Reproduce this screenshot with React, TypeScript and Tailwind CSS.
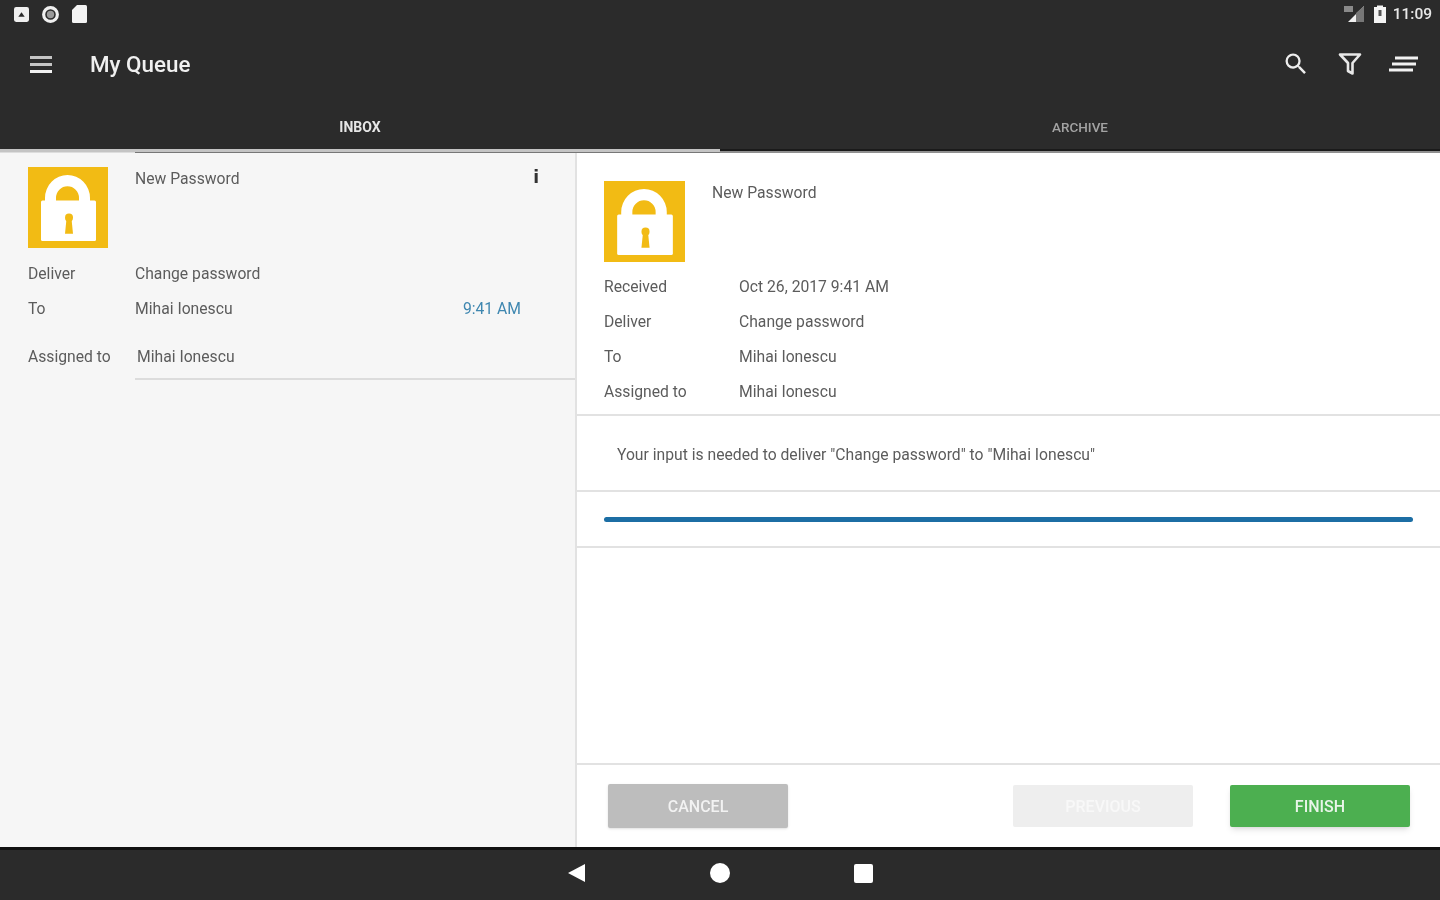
function LockTile({ className }: { className: string }) {
  return (
    <svg className={className} viewBox="0 0 80 80" preserveAspectRatio="none">
      <rect width="80" height="80" fill="#f2bb14" />
      <path d="M17 34 V30.5 A22.5 22.5 0 0 1 62 30.5 V34 H51 V30.5 A11.5 11.5 0 0 0 28 30.5 V34 Z" fill="#fff" />
      <rect x="13" y="33" width="55" height="40" rx="1.5" fill="#fff" />
      <circle cx="41" cy="50" r="4" fill="#f2bb14" />
      <path d="M38.5 51 L43.5 51 L45 66 L37 66 Z" fill="#f2bb14" />
    </svg>
  );
}

function MenuIcon() {
  return (
    <svg width="22" height="17" viewBox="0 0 22 17">
      <rect y="0" width="22" height="3" fill="#c4c4c4" />
      <rect y="7" width="22" height="3" fill="#c4c4c4" />
      <rect y="14" width="22" height="3" fill="#f2f2f2" />
    </svg>
  );
}

function SearchIcon() {
  return (
    <svg width="28" height="28" viewBox="0 0 24 24" fill="#eeeeee">
      <path d="M15.5 14h-.79l-.28-.27A6.471 6.471 0 0 0 16 9.5 6.5 6.5 0 1 0 9.5 16c1.61 0 3.09-.59 4.23-1.57l.27.28v.79l5 4.99L20.49 19l-4.99-5zm-6 0C7.01 14 5 11.99 5 9.5S7.01 5 9.5 5 14 7.01 14 9.5 11.99 14 9.5 14z" />
    </svg>
  );
}

function FilterIcon() {
  return (
    <svg width="24" height="24" viewBox="0 0 24 24" fill="none" stroke="#e8e8e8" strokeWidth="2.6">
      <path d="M2 2.5 H22 L14.5 11 V21.5 L10 19 V11 Z" strokeLinejoin="round" />
    </svg>
  );
}

function SortIcon() {
  return (
    <svg className="ml-[-1px]" width="29" height="16" viewBox="0 0 29 16" stroke="#f2f2f2" strokeWidth="2.8">
      <path d="M6 2 H29 M3 8 H27 M0 14 H24" />
    </svg>
  );
}

function StatusBar() {
  return (
    <div className="flex h-[28px] items-center justify-between pr-[8px] pl-[14px]">
      <div className="flex items-center gap-[12px]">
        <svg width="15" height="15" viewBox="0 0 14 14">
          <rect width="14" height="14" rx="2" fill="#f0f0f0" />
          <path d="M4 9 L7 5 L10 9 Z" fill="#2b2b2b" />
        </svg>
        <svg width="19" height="19" viewBox="0 0 18 18">
          <circle cx="9" cy="9" r="6.5" fill="none" stroke="#f0f0f0" strokeWidth="3" />
          <circle cx="9" cy="9" r="3.5" fill="#999" />
        </svg>
        <svg width="15" height="18" viewBox="0 0 15 18">
          <path d="M5 0 H13.5 Q15 0 15 1.5 V16.5 Q15 18 13.5 18 H1.5 Q0 18 0 16.5 V5 Z" fill="#f4f4f4" />
        </svg>
      </div>
      <div className="flex items-center gap-[6px]">
        <svg className="mr-[2px]" width="22" height="18" viewBox="0 0 22 18">
          <path d="M21 1 V17 H5 Z" fill="#f0f0f0" />
          <path d="M21 1 V17 H13 V8 Z" fill="#777" />
          <rect x="1" y="1" width="9" height="6" fill="#8a8a8a" />
        </svg>
        <svg width="14" height="18" viewBox="0 0 12 18">
          <path d="M3 2 V0.5 H9 V2 H12 V18 H0 V2 Z" fill="#f4f4f4" />
          <rect x="4.5" y="5" width="3" height="6" fill="#555" />
        </svg>
        <span className="pt-[1px] text-[15.5px] font-medium text-[#e8e8e8]">11:09</span>
      </div>
    </div>
  );
}

function Toolbar() {
  return (
    <div className="flex h-[72px] items-start justify-between pt-[20px] pr-[22px] pl-[30px]">
      <div className="flex items-center gap-[38px]">
        <MenuIcon />
        <span className="text-[22.4px] leading-[33px] font-medium text-[#f0f0f0]">My Queue</span>
      </div>
      <div className="flex items-center gap-[28px] pt-[2px]">
        <SearchIcon />
        <FilterIcon />
        <SortIcon />
      </div>
    </div>
  );
}

function Tabs() {
  return (
    <div className="flex h-[53px]">
      <div className="relative flex w-1/2 items-center justify-center pt-[1px] text-[14px] font-bold text-[#e6e6e6]">
        INBOX
        <div className="absolute right-0 bottom-[1px] left-0 h-[3px] bg-[#c4c4c4]" />
        <div className="absolute bottom-0 left-0 h-[1px] w-[135px] bg-[#dddddd]" />
        <div className="absolute right-0 bottom-0 left-[135px] h-[1px] bg-[#777777]" />
      </div>
      <div className="relative flex w-1/2 items-center justify-center pt-[1px] text-[13.5px] font-medium text-[#a3a3a3]">
        ARCHIVE
        <div className="absolute right-0 bottom-[2px] left-0 h-[2px] bg-[#1a1a1a]" />
        <div className="absolute right-0 bottom-0 left-0 h-[2px] bg-[#8f8f8f]" />
      </div>
    </div>
  );
}

function QueueItem() {
  return (
    <div className="flex flex-col pt-[14px] pl-[28px] text-[#5c5c5c]">
      <div className="flex h-[81px] items-start">
        <LockTile className="h-[81px] w-[80px] shrink-0" />
        <div className="ml-[27px] flex flex-1 items-start justify-between pr-[36px]">
          <span className="leading-[24px]">New Password</span>
          <span className="font-['DejaVu_Sans',sans-serif] text-[17px] leading-[20px] font-bold text-[#333]">i</span>
        </div>
      </div>
      <div className="mt-[14px] flex h-[24px] items-center">
        <span className="w-[107px]">Deliver</span>
        <span>Change password</span>
      </div>
      <div className="mt-[11px] flex h-[24px] items-center pr-[54px]">
        <span className="w-[107px]">To</span>
        <span className="flex-1">Mihai Ionescu</span>
        <span className="text-[#3f87b0]">9:41 AM</span>
      </div>
      <div className="mt-[24px] flex h-[24px] items-center">
        <span className="w-[109px]">Assigned to</span>
        <span>Mihai Ionescu</span>
      </div>
      <div className="mt-[9px] ml-[107px] h-[2px] bg-[#dcdcdc]" />
    </div>
  );
}

function DetailRow({ label, value }: { label: string; value: string }) {
  return (
    <div className="flex h-[35px] items-center pt-[1px]">
      <span className="w-[135px]">{label}</span>
      <span>{value}</span>
    </div>
  );
}

function ActionButton({ label, className }: { label: string; className: string }) {
  return (
    <div className={`flex h-[42px] w-[180px] items-center justify-center rounded-[2px] pt-[1px] text-[16px] font-medium ${className}`}>
      {label}
    </div>
  );
}

function Detail() {
  return (
    <div className="flex flex-1 flex-col bg-white text-[#5c5c5c]">
      <div className="flex flex-col border-b-2 border-[#e2e2e2] pt-[28px] pb-[5px] pl-[27px]">
        <div className="flex h-[81px] items-start">
          <LockTile className="h-[81px] w-[81px] shrink-0" />
          <span className="ml-[27px] leading-[24px]">New Password</span>
        </div>
        <div className="mt-[7px] flex flex-col">
          <DetailRow label="Received" value="Oct 26, 2017 9:41 AM" />
          <DetailRow label="Deliver" value="Change password" />
          <DetailRow label="To" value="Mihai Ionescu" />
          <DetailRow label="Assigned to" value="Mihai Ionescu" />
        </div>
      </div>
      <div className="flex h-[76px] items-center border-b-2 border-[#e2e2e2] pt-[4px] pl-[40px]">
        Your input is needed to deliver "Change password" to "Mihai Ionescu"
      </div>
      <div className="flex h-[56px] items-center border-b-2 border-[#e2e2e2] pr-[27px] pl-[27px]">
        <div className="h-[5px] w-full rounded-full bg-[#1c6ea4]" />
      </div>
      <div className="flex-1" />
      <div className="flex h-[84px] items-center justify-between border-t-2 border-[#e2e2e2] pr-[30px] pl-[31px]">
        <ActionButton label="CANCEL" className="h-[44px] bg-[#bdbdbd] text-[#f2f2f2] shadow-sm" />
        <div className="flex gap-[37px]">
          <ActionButton label="PREVIOUS" className="bg-[#eeeeee] text-[#f8f8f8]" />
          <ActionButton label="FINISH" className="bg-[#4caf50] text-[#e8f5e9] shadow-md" />
        </div>
      </div>
    </div>
  );
}

function NavBar() {
  return (
    <div className="flex h-[53px] items-center justify-center gap-[124px] border-t-[3px] border-[#111] bg-[#2b2b2b] pb-[4px]">
      <svg width="19" height="20" viewBox="0 0 19 20">
        <path d="M18 1 V19 L1 10 Z" fill="#fff" />
      </svg>
      <div className="h-[20px] w-[20px] rounded-full bg-white" />
      <div className="h-[19px] w-[19px] rounded-[2px] bg-white" />
    </div>
  );
}

export default function App() {
  return (
    <div className="flex h-[900px] w-[1440px] flex-col overflow-hidden bg-[#2b2b2b] font-['Roboto',sans-serif] text-[15.7px] blur-[0.5px]">
      <div className="bg-[#2b2b2b]">
        <StatusBar />
        <Toolbar />
        <Tabs />
      </div>
      <div className="flex min-h-0 flex-1">
        <div className="w-[577px] shrink-0 border-r-2 border-[#e2e2e2] bg-[#f6f6f6]">
          <QueueItem />
        </div>
        <Detail />
      </div>
      <NavBar />
    </div>
  );
}
